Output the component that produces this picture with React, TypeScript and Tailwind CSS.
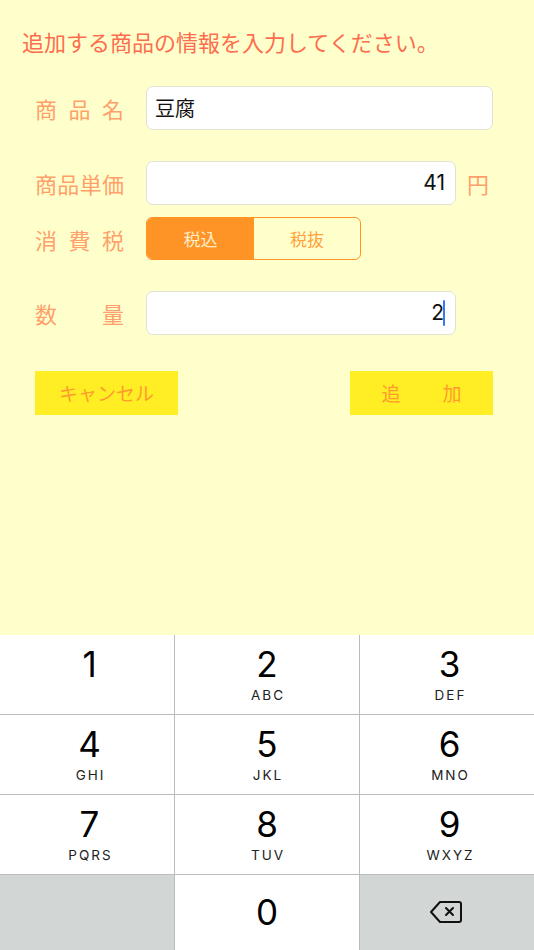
import React from 'react';

const JP = { fontFamily: '"Noto Sans CJK JP", "Noto Sans", sans-serif' };
const NUM = { fontFamily: 'Inter, "Noto Sans", sans-serif' };

// spreads label characters across a fixed width, like 商 品 名 / 数　　量
const Label = ({ text }: { text: string }) => (
  <div className="w-[89px] mr-[22px] flex justify-between text-[22px] leading-[30px] text-[#ff9f6b]">
    {text.split('').map((ch, i) => <span key={i}>{ch}</span>)}
  </div>
);

const KEYS = [
  { d: '1', l: '' }, { d: '2', l: 'ABC' }, { d: '3', l: 'DEF' },
  { d: '4', l: 'GHI' }, { d: '5', l: 'JKL' }, { d: '6', l: 'MNO' },
  { d: '7', l: 'PQRS' }, { d: '8', l: 'TUV' }, { d: '9', l: 'WXYZ' },
];

const Backspace = () => (
  <svg width="34" height="24" viewBox="0 0 34 24" fill="none" stroke="#111" strokeWidth="2" strokeLinejoin="round" strokeLinecap="round">
    <path d="M11 2 H30 a2 2 0 0 1 2 2 V20 a2 2 0 0 1 -2 2 H11 L2 12 Z" />
    <path d="M17 8 L24 15 M24 8 L17 15" />
  </svg>
);

export default function App() {
  return (
    <div className="w-[534px] h-[950px] overflow-hidden bg-[#ffffcc]" style={JP}>
      <div className="h-[635px]">
        <p className="pt-[26px] pl-[22px] text-[22px] leading-[30px] text-[#fd6d4e]">追加する商品の情報を入力してください。</p>

        <div className="pl-[35px] mt-[30px]">
          {/* 商品名 */}
          <div className="flex items-center h-[44px]">
            <Label text="商品名" />
            <div className="w-[347px] h-[44px] bg-white border border-[#e2e2d4] rounded-[7px] flex items-center px-[8px] text-[20px] text-[#111]">豆腐</div>
          </div>

          {/* 商品単価 */}
          <div className="flex items-center h-[44px] mt-[31px]">
            <Label text="商品単価" />
            <div className="w-[310px] h-[44px] bg-white border border-[#e2e2d4] rounded-[7px] flex items-center justify-end pr-[10px] text-[21px] text-[#111]" style={NUM}>41</div>
            <span className="ml-[11px] text-[22px] text-[#ff9f6b]">円</span>
          </div>

          {/* 消費税 */}
          <div className="flex items-center h-[43px] mt-[12px]">
            <Label text="消費税" />
            <div className="w-[215px] h-[43px] flex border border-[#ff9426] rounded-[6px] overflow-hidden text-[17px]">
              <div className="w-[107px] bg-[#ff9426] text-[#ffedc9] flex items-center justify-center">税込</div>
              <div className="flex-1 text-[#ffa040] flex items-center justify-center">税抜</div>
            </div>
          </div>

          {/* 数量 */}
          <div className="flex items-center h-[44px] mt-[31px]">
            <Label text="数量" />
            <div className="w-[310px] h-[44px] bg-white border border-[#e2e2d4] rounded-[7px] flex items-center justify-end pr-[10px] text-[21px] text-[#111]" style={NUM}>
              <span>2</span>
              <span className="w-[2px] h-[26px] bg-[#3a78f2] -ml-[1px] rounded-sm" />
            </div>
          </div>

          {/* buttons */}
          <div className="w-[458px] flex justify-between mt-[36px]">
            <button className="w-[143px] h-[44px] bg-[#ffee24] text-[19px] text-[#ff9b2e]">キャンセル</button>
            <button className="w-[143px] h-[44px] bg-[#ffee24] text-[19px] text-[#ff9b2e] flex items-center justify-center gap-[42px]">
              <span>追</span><span>加</span>
            </button>
          </div>
        </div>
      </div>

      {/* number pad */}
      <div className="h-[315px] grid grid-cols-[174px_184px_1fr] grid-rows-[79px_79px_79px_1fr] gap-px bg-[#bcbcbc]" style={NUM}>
        {KEYS.map((k, i) => (
          <div key={k.d} className={`bg-white flex flex-col items-center pt-[11px] ${i % 3 === 1 ? '' : 'pl-[5px]'}`}>
            <span className="text-[35px] leading-[36px] text-black">{k.d}</span>
            {k.l && <span className="mt-[5px] text-[13.5px] leading-[16px] tracking-[2px] pl-[2px] text-[#222]">{k.l}</span>}
          </div>
        ))}
        <div className="bg-[#d2d6d4]" />
        <div className="bg-white flex items-center justify-center pb-[2px]">
          <span className="text-[35px] leading-[36px] text-black">0</span>
        </div>
        <div className="bg-[#d2d6d4] flex items-center justify-center pb-[2px] pr-[2px]">
          <Backspace />
        </div>
      </div>
    </div>
  );
}
